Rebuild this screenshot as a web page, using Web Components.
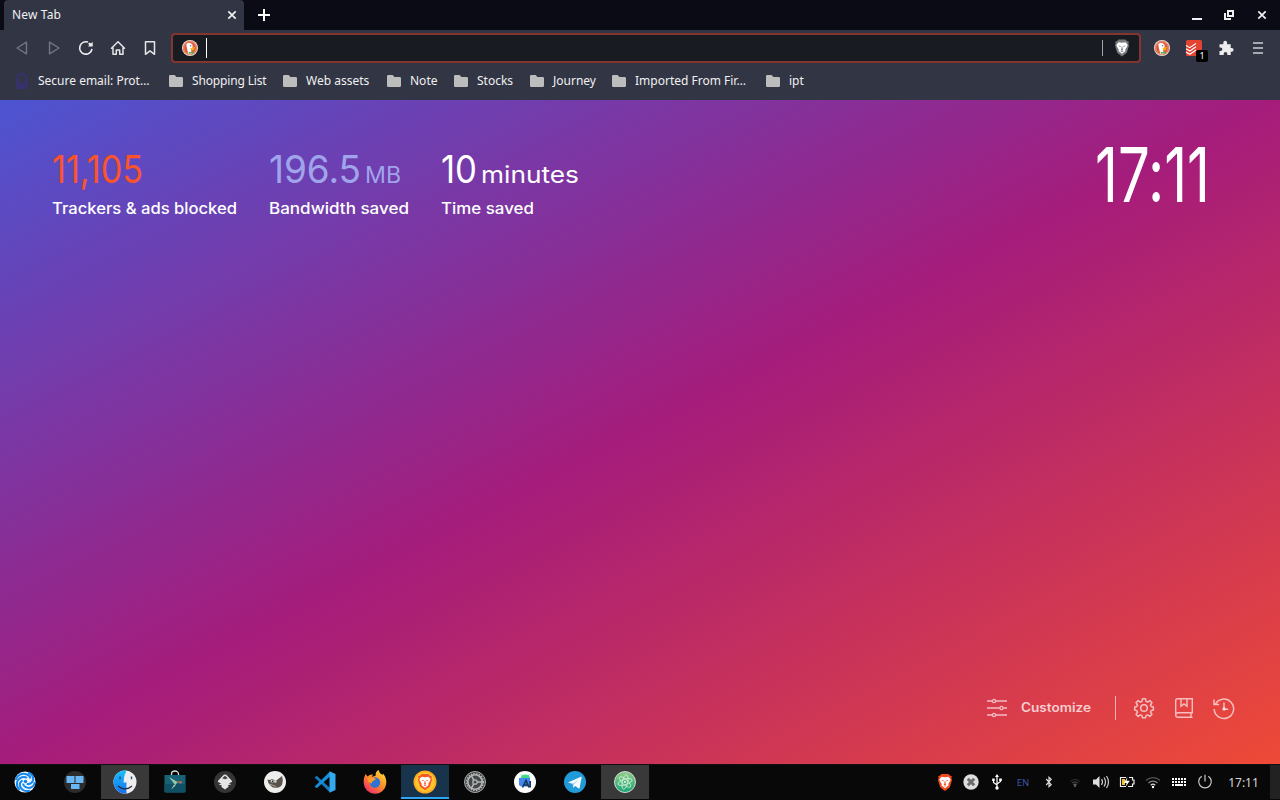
<!DOCTYPE html>
<html lang="en">
<head>
<meta charset="utf-8">
<title>New Tab</title>
<style>
html,body{margin:0;height:100%;overflow:hidden;background:#000}
body{font-family:"Noto Sans","Open Sans",sans-serif;font-size:12px}
</style>
</head>
<body>
<desktop-screen></desktop-screen>
<script>
const DUCK = `<circle cx="8" cy="8" r="8" fill="#f3e4de"/><circle cx="8" cy="8" r="7.200" fill="#de5833"/><circle cx="8" cy="8" r="6.300" fill="none" stroke="#f0b9a5" stroke-width=".7"/><path d="M4.300 4.800C4.500 3 7 2.500 8.600 3.200c1.800.7 2.400 2.200 2.100 3.800L9 9.200l.7 4.600c-1.100.4-2.300.5-3.400.1L4.900 8z" fill="#fff"/><path d="M8.700 8.200c1.200-.9 3-1 4.400-.8.200.9-1.800 1.500-3 1.600 1 .4 2.300.1 2.400.6-.3.9-2.900.9-3.800.1z" fill="#fdb913"/><path d="M6.700 11.800l2.100.5 3-1v2.300l-2.600-.2-2.500.4z" fill="#54a94b"/><circle cx="8.700" cy="5.700" r=".6" fill="#2d4f8e"/>`;
const LION = (bg, face) => `<path d="M4.500 0h7l1.600 1.800 1.700.2-.4 2.200.6 1.800-2.200 7.200L8 17l-4.800-3.800L1 6l.6-1.800L1.200 2l1.700-.2z" fill="${bg}"/><path d="M4.600 2.800l3.400.5 3.400-.5 2.200 2.500-.5 1.800-1.800 3 .2 1.500L8 14.200l-3.500-2.600.2-1.500-1.800-3-.5-1.800z" fill="${face}"/><path d="M4.200 6l2.700.5-.7 1.100zm7.600 0l-2.700.5.700 1.100zM7.600 7.200h.8l.3 2.800.8.500-1.500.8-1.500-.8.800-.5zM6.200 12L8 11.400l1.800.6-1.800.6z" fill="${bg}"/>`;
const WIFI = `<g fill="none" stroke="#ddd" stroke-width="1.200"><path d="M1 6.500a10 10 0 0 1 14 0" opacity=".35"/><path d="M3.500 9a6.400 6.400 0 0 1 9 0" opacity=".6"/><path d="M5.800 11.200a3.200 3.200 0 0 1 4.400 0"/></g><circle cx="8" cy="13" r="1.200" fill="#fff"/>`;
const ICONS = {
 close:[10,10,`<path d="M1.300 1.300l7.400 7.400m0-7.400l-7.400 7.400" stroke="#f0f0f2" stroke-width="1.700"/>`],
 plus:[12,12,`<path d="M6 0v12M0 6h12" stroke="#fff" stroke-width="2"/>`],
 min:[10,10,`<path d="M0 9h10" stroke="#f0f0f2" stroke-width="2"/>`],
 restore:[10,10,`<path d="M4 1h5v5H4zM1 3v6h6" fill="none" stroke="#f0f0f2" stroke-width="2"/>`],
 back:[16,16,`<path d="M12.500 2.200v11.600L3 8z" fill="none" stroke="#737580" stroke-width="1.400" stroke-linejoin="round"/>`],
 forward:[16,16,`<path d="M3.500 2.200v11.600L13 8z" fill="none" stroke="#737580" stroke-width="1.400" stroke-linejoin="round"/>`],
 reload:[16,16,`<path d="M10 2.100A6.200 6.200 0 1 0 14 9" fill="none" stroke="#eeeef0" stroke-width="1.600"/><path d="M14.700 1.800v4.700h-4.700l1.300-1.400-1.300-1.300 1.700-1.300 1.300 1z" fill="#eee"/>`],
 home:[16,16,`<path d="M1.500 8.300L8 1.800l6.500 6.500M3 7.500v6.700h3.300V10h3.400v4.200H13V7.500" fill="none" stroke="#e6e6e8" stroke-width="1.500" stroke-linejoin="round" stroke-linecap="round"/>`],
 mark:[16,16,`<path d="M3.500 1.800h9v12.500L8 10.900l-4.500 3.400z" fill="none" stroke="#e6e6e8" stroke-width="1.500" stroke-linejoin="round"/>`],
 duck:[16,16,DUCK],
 lionGray:[16,18,`<g transform="translate(0 .5)">${LION('#77797c','#fff')}</g>`],
 todo:[16,16,`<rect width="16" height="16" rx="1.600" fill="#e44332"/><path d="M0 5.500l3.800 2.200L10 3.500M0 8.800L3.800 11 10 6.700M0 12.100l3.800 2.200L10 10" fill="none" stroke="#fff" stroke-width="1.100"/>`],
 puzzle:[16,16,`<path d="M1.500 4.200h3.800V2.700a1.900 1.900 0 0 1 3.800 0v1.500h3.600v3.700h1a1.900 1.900 0 0 1 0 3.800h-1V15H9.300v-1.200a1.800 1.800 0 0 0-3.600 0V15H1.500v-3.900h1.100a1.750 1.750 0 0 0 0-3.500H1.500z" fill="#ececee"/>`],
 menu:[10,12,`<path d="M0 1h10M0 6h10M0 11h10" stroke="#d0d0d4" stroke-width="1.600"/>`],
 folder:[16,14,`<path d="M1 2.300Q1 1 2.300 1h4.400l1.700 2h5.300Q15 3 15 4.300v7.400Q15 13 13.700 13H2.300Q1 13 1 11.700z" fill="#bdbdbd"/>`],
 proton:[16,18,`<path d="M3.700 9V6.500a4.300 4.500 0 0 1 8.600 0V9" fill="none" stroke="#373365" stroke-width="2.800"/><path d="M2 7l6 5 6-5v10H2z" fill="#37336a"/>`],
 sliders:[20,20,`<g fill="none" stroke="currentColor" stroke-width="1.300"><path d="M0 3h5m4 0h11M0 10h12.500m4 0H20M0 17h5m4 0h11"/><circle cx="7" cy="3" r="1.600"/><circle cx="14.500" cy="10" r="1.600"/><circle cx="7" cy="17" r="1.600"/></g>`],
 gear:[20,20,`<g fill="none" stroke="currentColor" stroke-width="1.500" stroke-linejoin="round"><circle cx="10" cy="10" r="3.300"/><path d="M8.500.8h3l.6 2.600 1.500.7 2.300-1.500 2.100 2.100-1.500 2.300.7 1.500 2.200.5v3l-2.200.6-.7 1.400 1.500 2.300-2.100 2.100-2.300-1.500-1.500.7-.6 2.100h-3l-.6-2.100-1.500-.7-2.300 1.500L2 16.300 3.500 14l-.7-1.400L.7 12V9l2.100-.5L3.500 7 2 4.700l2.100-2.100 2.300 1.500 1.500-.7z"/></g>`],
 book:[20,22,`<path d="M3.500 1.700h14.800v14H3.500q-1.800.3-1.800 2.300 0 2.300 2.300 2.300h14.500M1.700 18V3.500q0-1.800 1.800-1.800M7 2v7.300L10 7l3 2.300V2M17 16v4" fill="none" stroke="currentColor" stroke-width="1.400"/>`],
 history:[24,22,`<path d="M3.200 7.500a9.700 9.700 0 1 1-1 4.500M2 2.500v5h5.200M12 5.500v6.700h4.200" fill="none" stroke="currentColor" stroke-width="1.500"/><circle cx="12" cy="12" r="1.700" fill="currentColor"/>`],
 deepin:[22,22,`<circle cx="11" cy="11" r="10.500" fill="#edf7ff"/><g fill="none" stroke="#1687ed" stroke-width="2"><path d="M1.500 9C3 4 8 1.500 13 3.500q3 1 3.500 4"/><path d="M5.500 19C1.500 15 2 8 8 6.200q3-.8 5 .8"/><path d="M16 19.800c-5 1-10-1-10.200-6q0-3 2.700-4.500"/><path d="M20.800 11c-.5 5-5 7-9 5.200q-2.500-1-2.800-3.500"/><path d="M14 1.500c5 1.500 7 7 3.500 10.200q-2 2-4.700 1.200"/></g><circle cx="11.500" cy="10.500" r="1.800" fill="#1687ed"/>`],
 tasks:[22,22,`<circle cx="11" cy="11" r="11" fill="#2c2c2c"/><path d="M2.500 5h8v7h-8zm9 0h8v7h-8zM7 13h8.500v5H7z" fill="#68b7f4"/>`],
 finder:[24,24,`<defs><linearGradient id="f" x2="0" y2="1"><stop stop-color="#18c1fb"/><stop offset="1" stop-color="#176ff0"/></linearGradient></defs><circle cx="12" cy="12" r="11.500" fill="#ededf0"/><path d="M13.500.6A11.500 11.500 0 1 0 13.500 23.400Q13.200 19 13.500 12.500H10.500Q10.500 6 13.500.6z" fill="url(#f)"/><path d="M5 16c4 3.700 10 3.700 14 0" fill="none" stroke="#222c3c" stroke-width="1.200"/><path d="M7 6.500v2.800M18.500 6.500v2.800" stroke="#254b68" stroke-width="1.400"/>`],
 snap:[22,22,`<path d="M7.500 5V3a3.500 3 0 0 1 7 0v2" fill="none" stroke="#ddd" stroke-width="1.300"/><path d="M.5 4h21v16q0 1.500-1.500 1.500H2Q.5 21.500.5 20z" fill="#176375"/><path d="M.5 13h21v7q0 1.500-1.500 1.500H2Q.5 21.500.5 20z" fill="#105064"/><path d="M5 6l8.500 5-2.200 3.200zM7 18.500l3-5 1.700 1z" fill="#9ac5ae"/><path d="M12 10.500h6.500l-1.700 2z" fill="#e26d4d"/>`],
 inkscape:[22,22,`<circle cx="11" cy="11" r="11" fill="#333436"/><path d="M11 3.500q1.200 0 2 1l4.800 5.200q1 1.300-1 1.800l-2 .8 2.500 1-3.500 1 1 1.300L11 18.500l-3.800-2.700L8 14.400l-3.300-1 2.400-1-2-.8q-2-.6-1-1.900L9 4.500q.8-1 2-1z" fill="#e5e5e5"/><path d="M8.700 6.800L11 4.700l2.300 2.100v1.500l-1-.7-1.300 1-1.200-1-1.100.7z" fill="#444"/>`],
 gimp:[22,22,`<circle cx="11" cy="11" r="11" fill="#eeeeed"/><path d="M3.500 8.500l2.500.5 2-1 4 1.700L18 5q1.700 4.500.2 8-1.500 4-6 3.800-4 .4-6-2.500Q3.800 12 3.500 8.500z" fill="#59534c"/><circle cx="8.200" cy="10.200" r="1.400" fill="#eee"/><circle cx="11.300" cy="10.500" r="1.200" fill="#ddd"/><circle cx="8.400" cy="10.200" r=".7"/><path d="M5 13l7 2.500" stroke="#a9a49d"/>`],
 code:[22,22,`<path d="M.7 6.500l2-1.700L16 17v4.500z" fill="#137bc0"/><path d="M.7 15.500l2 1.700L16 5.500V.5z" fill="#1690dc"/><path d="M15.500.3l6 2.700v16l-6 2.700z" fill="#35a9ef"/>`],
 firefox:[24,24,`<defs><linearGradient id="a" x1=".9" y1="0" x2=".2" y2="1"><stop stop-color="#ffe234"/><stop offset=".5" stop-color="#ff8b29"/><stop offset="1" stop-color="#ef276c"/></linearGradient></defs><path d="M1 8L2.500 4l2 2.500Q7 4 10 4.500L8.800 7l4-1.500Q12 2 15.500 0q.5 3.200 4 5l.5-1.500Q24 8 23.200 14A11.300 11.300 0 0 1 .7 13Q.5 10 1 8z" fill="url(#a)"/><circle cx="12" cy="12.500" r="5.200" fill="#2e72d2"/><path d="M4.500 8.300l6-.8 2.500 1.700-3.500 2-1 2.300-3.500-2z" fill="#ff9a25"/>`],
 brave:[24,24,`<circle cx="12" cy="12" r="11.500" fill="#fbaa20"/><circle cx="12" cy="12" r="10" fill="#ffc32d"/><g transform="translate(4 4) scale(1 .96)">${LION('#f45a26','#fff')}</g>`],
 settings:[22,22,`<circle cx="11" cy="11" r="10.500" fill="#454849" stroke="#a9abad"/><g fill="none" stroke="#b5b7b8"><circle cx="11" cy="11" r="7.200" stroke-width="1.600"/><circle cx="11" cy="11" r="8.500" stroke-width="1.200" stroke-dasharray="1.400 1.330"/><circle cx="11" cy="11" r="2.200" stroke-width="1.300"/><path d="M13 11h5.500M10 9.300L7.300 4.600m2.700 8.100l-2.700 4.700" stroke-width="1.600"/></g>`],
 android:[22,22,`<circle cx="11" cy="11" r="11" fill="#fff"/><path d="M6.500 7.500a4.800 4 0 0 1 9.600 0z" fill="#3ddc84"/><path d="M7.500 3.500l1.200 2m6.300-2l-1.200 2" stroke="#3ddc84"/><path d="M5 7h11v8.500H7L5 14z" fill="#4387f5"/><path d="M8.500 16.500l3.500-7 3 7M10 14h4M16.200 10v6.500" fill="none" stroke="#173855" stroke-width="1.600"/>`],
 telegram:[22,22,`<circle cx="11" cy="11" r="11" fill="#219bd8"/><path d="M4 11.500l13-5.800q.8-.3.600.8L15.600 17q-.3.900-1.200.3l-3.200-2.400-2 1.900-.5-4z" fill="#f6fafc"/><path d="M8.700 12.800L15 8l-5 5.500-.8 3.300z" fill="#b6d2e4"/>`],
 atom:[22,22,`<defs><linearGradient id="g" x2="0" y2="1"><stop stop-color="#93ce87"/><stop offset="1" stop-color="#16a574"/></linearGradient></defs><circle cx="11" cy="11" r="10.500" fill="url(#g)" stroke="#d0d8d2"/><g fill="none" stroke="#e1f3e4" stroke-width=".75"><ellipse cx="11" cy="11" rx="2.700" ry="7.300" transform="rotate(12 11 11)"/><ellipse cx="11" cy="11" rx="2.700" ry="7.300" transform="rotate(72 11 11)"/><ellipse cx="11" cy="11" rx="2.700" ry="7.300" transform="rotate(-48 11 11)"/></g><circle cx="11" cy="11" r=".9" fill="#fff"/>`],
 lion:[16,17,LION('#f4481e','#fff')],
 disc:[16,16,`<circle cx="8" cy="8" r="7.700" fill="#dedede"/><path d="M4.800 4.800l6.400 6.400m0-6.400l-6.400 6.400" stroke="#6c6c6c" stroke-width="3"/>`],
 usb:[16,16,`<g fill="none" stroke="#fff" stroke-width="1.200"><path d="M8 2v11M4.500 6v2.500L8 11m3.500-6v2.500L8 10"/></g><path d="M8 0l2 3H6zM3.200 4.500h2.500V7H3.200zm7 0h2.600V7h-2.600z" fill="#fff"/><circle cx="8" cy="14" r="1.700" fill="#fff"/>`],
 bluetooth:[16,16,`<path d="M5.200 5l5 5.600L8 12.700V3.300l2.200 2.100-5 5.600" fill="none" stroke="#ddd" stroke-width="1.200"/>`],
 wifi:[16,16,WIFI],
 dimWifi:[16,16,`<g transform="translate(2.500 3) scale(.69)" opacity=".7">${WIFI}</g>`],
 volume:[18,16,`<path d="M1 5.500h3L7.500 2v12L4 10.500H1z" fill="#ddd"/><path d="M9.500 5.200q2 2.800 0 5.600M12 3.500q3 4.500 0 9M14.500 2q4 6 0 12" fill="none" stroke="#ccc" stroke-width="1.200"/>`],
 battery:[16,16,`<path d="M7 3.500H1.500v9H7m3-9h3.500V6H15v4h-1.500v2.500H9" fill="none" stroke="#eee" stroke-width="1.200"/><path d="M3 5h3v6H3z" fill="#f5c029"/><path d="M8.500 3L4.800 9h2.900L6.500 13l4.300-6.200H7.600z" fill="#fff"/>`],
 keyboard:[16,16,`<path d="M1 5h14M1 8h14" stroke="#fff" stroke-width="2" stroke-dasharray="2 1"/><path d="M1 11h2m1 0h8m1 0h2" stroke="#fff" stroke-width="2"/>`],
 power:[16,16,`<path d="M4.700 2.300a6.300 6.300 0 1 0 6.600 0M8 .8v6.700" fill="none" stroke="#c7c7c7" stroke-width="1.200"/>`]
};

function define(name, css, html) {
  customElements.define(name, class extends HTMLElement {
    constructor() {
      super();
      this.attachShadow({mode:'open'});
    }
    connectedCallback() {
      const markup = typeof html === 'function' ? html(this) : html;
      this.shadowRoot.innerHTML = `<style>:host{display:block;box-sizing:border-box}*{box-sizing:border-box}${css}</style>${markup}`;
    }
  });
}
const icon = n => `<ui-icon name="${n}"></ui-icon>`;

define('ui-icon', `:host{display:inline-flex;flex:none}svg{display:block;overflow:visible}`, el => {
  const [w,h,body] = ICONS[el.getAttribute('name')];
  return `<svg width="${w}" height="${h}" viewBox="0 0 ${w} ${h}">${body}</svg>`;
});

/* A line of text set to an exact width, baseline at the "base" attribute. */
define('fit-text', `:host{flex:none}svg{display:block;overflow:visible}text{font-family:Inter,"Open Sans",sans-serif;font-feature-settings:"calt" 0;fill:currentColor}`, el => {
  const a = n => el.getAttribute(n);
  return `<svg width="${a('width')}" height="${a('height')}"><text x="0" y="${a('base')}" font-size="${a('size')}" font-weight="${a('weight')}" textLength="${a('width')}" lengthAdjust="spacingAndGlyphs">${el.dataset.text.replace('&','&amp;')}</text></svg>`;
});

define('tab-strip', `:host{display:flex;height:30px;background:#0a0b15;padding-left:4px}
.tab{width:240px;background:#323544;border-radius:4px 4px 0 0;display:flex;align-items:center;justify-content:space-between;padding:0 7px 0 8px;color:#f0f0f2}
.tab span{padding-bottom:2px;letter-spacing:.15px}
.new{width:40px;display:grid;place-items:center}
.win{margin-left:auto;display:flex;align-items:center;gap:22px;padding-right:13px}.win :last-child{margin-left:1px}`,
`<div class="tab"><span>New Tab</span>${icon('close')}</div><div class="new">${icon('plus')}</div><div class="win">${icon('min')}${icon('restore')}${icon('close')}</div>`);

define('nav-bar', `:host{display:flex;height:36px;align-items:center;background:#323544;padding-left:6px}
.b{width:32px;height:32px;display:grid;place-items:center;position:relative}
.omni{width:970px;height:30px;margin-left:5px;margin-right:5px;border:2px solid #83362f;border-radius:4px;background:#191b22;display:flex;align-items:center;padding:0 9px}
.caret{width:1px;height:20px;background:#fff;margin-left:8px}.sep{width:1px;height:16px;background:#a3a4a8;margin-left:auto;margin-right:11px}
.badge{position:absolute;left:18px;top:18px;width:12px;height:12px;border-radius:2px;background:#000;color:#fff;font-size:9px;line-height:12px;text-align:center}`,
`${['back','forward','reload','home','mark'].map(n=>`<div class="b">${icon(n)}</div>`).join('')}<div class="omni">${icon('duck')}<i class="caret"></i><i class="sep"></i>${icon('lionGray')}</div><div class="b">${icon('duck')}</div><div class="b">${icon('todo')}<span class="badge">1</span></div><div class="b">${icon('puzzle')}</div><div class="b">${icon('menu')}</div>`);

define('bookmark-item', `:host{display:flex;align-items:center;gap:8px;flex:none;white-space:nowrap}span{padding-bottom:2px}`, el => `${icon(el.getAttribute('icon'))}<span><slot></slot></span>`);

define('bookmarks-bar', `:host{display:flex;height:34px;background:#323544;color:#f0f0f2;padding:0 0 4px 14px}`,
[['Secure email: Prot…',154,'proton'],['Shopping List',114,'folder',-.15],['Web assets',104],['Note',67],['Stocks',76],['Journey',82],['Imported From Fir…',154],['ipt',60]].map(([t,w,i,s])=>`<bookmark-item icon="${i||'folder'}" style="width:${w}px;letter-spacing:${s||0}px">${t}</bookmark-item>`).join(''));

define('stat-block', `:host{color:#fff}.v{color:var(--value,#fff);display:flex;gap:4px}`,
`<div class="v"><slot name="value"></slot></div><slot></slot>`);

const fit = (t,w,h,base,size,weight,slot='') => `<fit-text ${slot&&`slot="${slot}"`} data-text="${t.replace('&','&amp;')}" width="${w}" height="${h}" base="${base}" size="${size}" weight="${weight}"></fit-text>`;

define('new-tab-page', `:host{flex:1;display:flex;flex-direction:column;justify-content:space-between;background:linear-gradient(to bottom right,#4d54d1 0%,#a51c7b 50%,#ee4a37 100%);color:#fff}
header{display:flex;align-items:flex-start;padding:44px 70px 0 52px;gap:32px}
.clock{margin-left:auto}
footer{display:flex;align-items:center;justify-content:flex-end;height:24px;margin-bottom:44px;padding-right:44px;color:#ffffffa8}
footer fit-text{margin:0 24px 0 14px;color:#ffffffc0}.sep{width:1px;height:24px;background:#ffffff99;margin-right:18px}
.tools{display:flex;align-items:center;gap:18px}.tools :first-child{margin-right:2px}`,
`<header>
<stat-block style="--value:#fb542b">${fit('11,105',91,54,39,38.5,400,'value')}${fit('Trackers & ads blocked',185,24,16,15.5,500)}</stat-block>
<stat-block style="--value:#a0a5eb">${fit('196.5',92,54,39,38.5,400,'value')}${fit('MB',36,54,39,22.5,400,'value')}${fit('Bandwidth saved',140,24,16,15.5,500)}</stat-block>
<stat-block>${fit('10',36,54,39,38.5,400,'value')}${fit('minutes',98,54,39,23.5,400,'value')}${fit('Time saved',93,24,16,15.5,500)}</stat-block>
<div class="clock">${fit('17:11',115,70,58,76,400)}</div>
</header>
<footer>${icon('sliders')}${fit('Customize',70,20,14,12.5,600)}<i class="sep"></i><div class="tools">${icon('gear')}${icon('book')}${icon('history')}</div></footer>`);

define('task-bar', `:host{display:flex;height:36px;background:#080808;border-top:1px solid #101010;padding-left:1px;color:#d6d6d6}
.apps{display:flex;gap:2px;height:34px}.app{width:48px;display:grid;place-items:center}
.open{background:#393939}.current{background:#17344c;box-shadow:inset 0 -2px #2ca7f8}
.tray{display:flex;margin-left:auto;height:34px;align-items:center}.t{width:26px;display:grid;place-items:center}
.lang{color:#4054a4;font-size:9.5px}.time{width:52px;text-align:center;padding-right:1px}.desk{width:10px;height:34px;background:#222}`,
`<div class="apps">${['deepin','tasks','finder','snap','inkscape','gimp','code','firefox','brave','settings','android','telegram','atom'].map(n=>`<div class="app ${n==='finder'||n==='atom'?'open':n==='brave'?'current':''}">${icon(n)}</div>`).join('')}</div>
<div class="tray">${['lion','disc','usb','','bluetooth','dimWifi','volume','battery','wifi','keyboard','power'].map(n=>`<div class="t">${n?icon(n):'<span class="lang">EN</span>'}</div>`).join('')}<div class="time">17:11</div><div class="desk"></div></div>`);

define('desktop-screen', `:host{display:flex;flex-direction:column;width:1280px;height:800px}`,
`<tab-strip></tab-strip><nav-bar></nav-bar><bookmarks-bar></bookmarks-bar><new-tab-page></new-tab-page><task-bar></task-bar>`);
</script>
</body>
</html>
